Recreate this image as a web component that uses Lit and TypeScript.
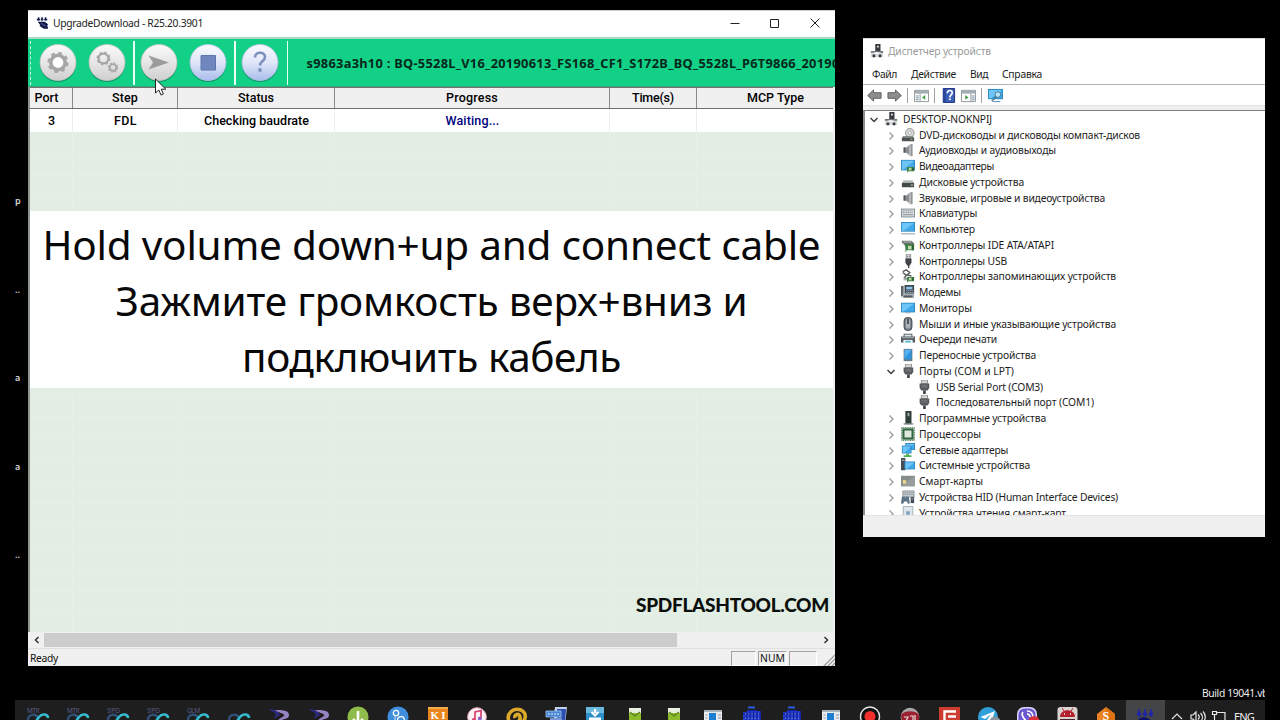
import { LitElement, html, svg, css, nothing } from "lit";
import { customElement, property } from "lit/decorators.js";

/** A line of text whose tracking is adjusted so that it spans `w` pixels. */
@customElement("fit-text")
class FitText extends LitElement {
  static styles = css`
    :host { display: inline-block; white-space: pre; }
  `;
  @property({ type: Number }) w = 0;
  @property() text = "";
  render() {
    return html`<span>${this.text}</span>`;
  }
  updated() {
    const s = this.renderRoot.querySelector("span") as HTMLElement;
    s.style.letterSpacing = "0px";
    const n = this.text.length;
    if (this.w && n) s.style.letterSpacing = (this.w - s.getBoundingClientRect().width) / n + "px";
  }
}

const fit = (text: string, w: number) => html`<fit-text .text=${text} .w=${w}></fit-text>`;

const board = svg`<path d="M7 9h8v5H8v1H7z" fill="#3f7f45"/><path d="M9 10h3v3H9z" fill="#bcd6a4"/><path d="M13 10h1v3h-1z" fill="#1d4a28"/>`;
const screen = (x: number, y: number, w: number, h: number) => svg`
  <rect x=${x} y=${y} width=${w} height=${h} fill="#2f7fb5"/>
  <rect x=${x + 0.8} y=${y + 0.8} width=${w - 1.6} height=${h - 1.6} fill="#3fa9ea"/>
  <path d=${`M${x + w - 1} ${y + 1}L${x + 3} ${y + h - 1}H${x + 1}V${y + 1}z`} fill="#6cc4f7"/>`;

const glyphs: Record<string, unknown> = {
  pc: svg`<path d="M6 0h6v9H6z" fill="#3a3d40"/><path d="M8 2h2v2H8z" fill="#e8e8e8"/><path d="M1 8h14v7H1z" fill="#d9dcde"/><path d="M1 8h14v2H1z" fill="#70757a"/><path d="M3 12h3v3H3zM10 12h3v3h-3z" fill="#33373a"/><path d="M4 10l4-1 4 1v1H4z" fill="#f6f6f6"/>`,
  dvd: svg`<circle cx="10" cy="5.500" r="5" fill="#d2d4d5" stroke="#8f9294"/><circle cx="10" cy="5.500" r="1.600" fill="#fff" stroke="#999" stroke-width=".7"/><path d="M3 9h10l2 2v4H1v-4z" fill="#4e5254"/><path d="M3 9h10l2 2H1z" fill="#8b8f91"/><path d="M11 12.500h2v1h-2z" fill="#9ee089"/>`,
  sound: svg`<path d="M3 5h3l5-4v14l-5-4H3z" fill="#8b8f92"/><path d="M3 5h2v6H3z" fill="#55595c"/><path d="M9 3l3-2v14l-3-2z" fill="#b5b8ba"/><path d="M12 1h1v14h-1z" fill="#4d5154"/>`,
  video: svg`${screen(0, 1, 16, 12)}${board}`,
  disk: svg`<path d="M3 6h10l2 3H1z" fill="#b9bcbd"/><path d="M1 9h14v5H1z" fill="#45494b"/><path d="M11 11h3v1h-3z" fill="#d9dcdc"/>`,
  keyboard: svg`<path d="M0 3h16v10H0z" fill="#7d858b"/><path d="M1 4h14v8H1z" fill="#dfe3e5"/><path d="M2 5.500h12M2 7.500h12" stroke="#757d82" stroke-dasharray="1.300 .7"/><path d="M2 10h12" stroke="#757d82"/>`,
  computer: svg`${screen(0, 0, 16, 11)}<path d="M0 13.500h16" stroke="#7d95a5"/>`,
  ide: svg`<path d="M1 3h11l3 3v2H3V6H1z" fill="#6d7673"/><path d="M3 4h9v1H3z" fill="#b9c6bd"/><path d="M4 7h11v7H6v2H5v-5z" fill="#3f7f45"/><path d="M8 9h4v4H8z" fill="#c4dcb2"/><path d="M13 8h1v6h-1z" fill="#1d4a28"/>`,
  usb: svg`<path d="M6 0h5v5H6z" fill="#d7d9da" stroke="#777" stroke-width=".8"/><path d="M5 5h7v5l-2 3H7l-2-3z" fill="#3f4345"/><path d="M8 12h1.500v4H8z" fill="#3f4345"/><path d="M7 2h1v1H7zM9 2h1v1H9z" fill="#555"/>`,
  storage: svg`<path d="M2 3l4-2 4 3-3 3 5 1M2 4l4 3-2 3 4 2" fill="none" stroke="#585d5a" stroke-width="1.700"/><path d="M3 10h4v3H3z" fill="#a5aba7"/>${board}`,
  modem: svg`<path d="M4 0h11v10H4z" fill="#3d4a56"/><path d="M6 2h7v3H6z" fill="#8fc5e8"/><path d="M6 6.500h8M6 8.500h8" stroke="#c7d1d8" stroke-dasharray="1.300 1"/><path d="M0 1h3v12H0z" fill="#5c666e"/><path d="M2 10h13v5H2z" fill="#a9b0b5"/><path d="M3 12h10v2H3z" fill="#4e565b"/>`,
  monitor: svg`${screen(0, 2, 16, 11)}<path d="M5 13.500h6" stroke="#8fa4b0"/>`,
  mouse: svg`<rect x="3.500" y=".5" width="9" height="15" rx="4" fill="#77818a" stroke="#363c40"/><rect x="5.500" y="2" width="5" height="11" rx="2.500" fill="#aab3ba"/><path d="M8 2v6" stroke="#2e3336" stroke-width="1.600"/>`,
  printer: svg`<path d="M3 2h10v4H3z" fill="#4c5459"/><path d="M4 3h8v3H4z" fill="#dfe4e6"/><path d="M0 5h16v7h-3V9H3v3H0z" fill="#545b60"/><path d="M1 6.500h14" stroke="#b7bec2"/><path d="M3 9h10v4H3z" fill="#e9f3f5"/><path d="M5 10h6v2H5z" fill="#57b9d0"/>`,
  portable: svg`<path d="M3 1h10v14H3z" fill="#6b7880"/><path d="M4 2h8v11H4z" fill="#2b93e0"/><path d="M4 2h8L4 12z" fill="#55b0f0"/>`,
  port: svg`<path d="M5 0h7v4H5z" fill="#d4d4d4" stroke="#777" stroke-width=".8"/><path d="M3 4h11v5l-2 3H5L3 9z" fill="#56595b"/><path d="M5 6h7M5 8h7" stroke="#8a8d8f" stroke-width=".8"/><path d="M7 12h3v4H7z" fill="#3c3f41"/>`,
  software: svg`<path d="M5 0h7v15H5z" fill="#2f3f38"/><path d="M7.500 2h2v4h-2z" fill="#a8b9b0"/><path d="M3 14h11v1.500H3z" fill="#7f8783"/>`,
  cpu: svg`<path d="M.5.5h15v15H.5z" fill="none" stroke="#3c6b47" stroke-dasharray="1.200 .8"/><path d="M1.500 1.500h13v13h-13z" fill="#2f6540"/><path d="M4 4h8v8H4z" fill="#dfe9de"/>`,
  network: svg`${screen(5, 0, 11, 8)}${screen(1, 3, 11, 9)}<path d="M6 12h3v2h3v2H3v-2h3z" fill="#4caf59"/>`,
  system: svg`<path d="M0 0h5v14H0z" fill="#444e56"/><path d="M1 2h3v1H1z" fill="#bdc6cc"/>${screen(4, 4, 12, 9)}`,
  card: svg`<path d="M0 2h16v12H0z" fill="#868d8d"/><path d="M0 14L16 2v12z" fill="#979d9c"/><path d="M2 7h4v4H2z" fill="#ead68b"/>`,
  hid: svg`<path d="M2 1h13v7H2z" fill="#c5cbcf" stroke="#7d868c" stroke-width=".8"/><path d="M3 3h11M3 5h11" stroke="#7d868c" stroke-dasharray="1.200 .8"/><path d="M1 8l3-1 1 2 1-2 3 1 1 7-2 1-1-3H4l-2 3-2-1z" fill="#5b7384"/><path d="M11 8h4v7h-4z" fill="#444f57"/><path d="M12 10h2" stroke="#bcd"/>`,
  reader: svg`<path d="M2.500.5h11v15h-11z" fill="#dfe7ec" stroke="#9aa8b1"/><path d="M6 6h4v4H6z" fill="#7ca3bd"/>`,
};

type Row = { icon: string; text: string; w: number; depth: number; open?: boolean; leaf?: boolean };
const r = (icon: string, text: string, w: number): Row => ({ icon, text, w, depth: 1 });
const ROWS: Row[] = [
  { icon: "pc", text: "DESKTOP-NOKNPIJ", w: 89, depth: 0, open: true },
  r("dvd", "DVD-дисководы и дисководы компакт-дисков", 221),
  r("sound", "Аудиовходы и аудиовыходы", 137),
  r("video", "Видеоадаптеры", 75),
  r("disk", "Дисковые устройства", 105),
  r("sound", "Звуковые, игровые и видеоустройства", 186),
  r("keyboard", "Клавиатуры", 58),
  r("computer", "Компьютер", 56),
  r("ide", "Контроллеры IDE ATA/ATAPI", 135),
  r("usb", "Контроллеры USB", 88),
  r("storage", "Контроллеры запоминающих устройств", 197),
  r("modem", "Модемы", 42),
  r("monitor", "Мониторы", 53),
  r("mouse", "Мыши и иные указывающие устройства", 197),
  r("printer", "Очереди печати", 78),
  r("portable", "Переносные устройства", 117),
  { icon: "port", text: "Порты (COM и LPT)", w: 95, depth: 1, open: true },
  { icon: "port", text: "USB Serial Port (COM3)", w: 107, depth: 2, leaf: true },
  { icon: "port", text: "Последовательный порт (COM1)", w: 158, depth: 2, leaf: true },
  r("software", "Программные устройства", 127),
  r("cpu", "Процессоры", 62),
  r("network", "Сетевые адаптеры", 89),
  r("system", "Системные устройства", 111),
  r("card", "Смарт-карты", 64),
  r("hid", "Устройства HID (Human Interface Devices)", 199),
  r("reader", "Устройства чтения смарт-карт", 147),
];

@customElement("device-manager")
class DeviceManager extends LitElement {
  static styles = css`
    :host { display: flex; flex-direction: column; background: #fff; overflow: hidden; color: #1c1c1c; font: 10.3px/16px "Noto Sans", "Open Sans", sans-serif; }
    .title { height: 28px; display: flex; align-items: center; gap: 4px; padding: 0 0 3px 7px; color: #999; border-top: 1px solid #ddd; box-sizing: border-box; }
    .title svg { width: 14px; height: 14px; }
    .menu { height: 18px; display: flex; align-items: center; gap: 14px; padding: 0 0 2px 9px; border-bottom: 1px solid #b4b4b4; box-sizing: border-box; height: 19px; }
    .tools { height: 20px; display: flex; align-items: center; padding: 0 0 0 4px; }
    .tools svg { width: 15px; height: 15px; }
    .tools .arrow { margin-right: 5px; }
    .sep { width: 1px; height: 15px; background: #a0a0a0; margin-right: 6px; }
    .gap { width: 5px; }
    .band { height: 5px; background: #f0f0f0; border-top: 1px solid #e2e2e2; box-sizing: border-box; }
    .tree { flex: 1; min-height: 0; overflow: hidden; border-top: 1.500px solid #7c7c7c; border-left: 2px solid #8a8a8a; }
    .row { height: 15.750px; display: flex; align-items: center; white-space: nowrap; }
    .d0 { padding-left: 2px; }
    .d1 { padding-left: 19px; }
    .d2 { padding-left: 52px; }
    .chev { width: 14px; height: 12px; fill: none; stroke: #9a9a9a; stroke-width: 1.300; margin-right: 3px; }
    .chev.open { stroke: #404040; stroke-width: 1.500; }
    .ico { width: 14px; height: 14px; margin-right: 4px; }
    .d0 .ico { margin-right: 5px; }
    .d2 .ico { margin-right: 5px; }
    .foot { height: 22px; background: #f0f0f0; border-top: 1px solid #e4e4e4; box-sizing: border-box; }
  `;
  render() {
    return html`
      <div class="title"><svg viewBox="0 0 16 16">${glyphs.pc}</svg>${fit("Диспетчер устройств", 103)}</div>
      <div class="menu">${fit("Файл", 25)}${fit("Действие", 45)}${fit("Вид", 18)}${fit("Справка", 40)}</div>
      <div class="tools">
        <svg class="arrow" viewBox="0 0 16 16"><path d="M.7 8L7 2v3h8v6H7v3z" fill="#8d8d8d" stroke="#5e5e5e" /></svg>
        <svg class="arrow" viewBox="0 0 16 16"><path d="M15.300 8L9 2v3H1v6h8v3z" fill="#8d8d8d" stroke="#5e5e5e" /></svg>
        <div class="sep"></div>
        <svg viewBox="0 0 16 16"><path d="M.5 2.500h15v12H.5z" fill="#fff" stroke="#8c959b" /><path d="M1 3h14v3H1z" fill="#a4adb3" /><path d="M2 8.500h3M2 10.500h3M2 12.500h3" stroke="#6d8294" /><path d="M6.500 6v8" stroke="#8c959b" /><path d="M12 7.500v5L8.500 10z" fill="#43a047" /></svg>
        <div class="gap"></div><div class="sep"></div>
        <svg viewBox="0 0 16 16"><path d="M2.500.5h12v15h-12z" fill="#3c5fb8" stroke="#1d2f73" /><path d="M2 .5h3v15H2z" fill="#2a4497" /><path d="M6.800 5.500c0-4 5.600-3.500 5.200-.2-.2 2-2.600 2-2.600 4.700M8.500 12h2" fill="none" stroke="#fff" stroke-width="1.800" /></svg>
        <div class="gap"></div>
        <svg viewBox="0 0 16 16"><path d="M.5 2.500h15v12H.5z" fill="#fff" stroke="#8c959b" /><path d="M1 3h14v3H1z" fill="#a4adb3" /><path d="M11.500 8.500h3M11.500 10.500h3M11.500 12.500h3" stroke="#6d8294" /><path d="M10.500 6v8" stroke="#8c959b" /><path d="M4.500 7.500v5L8 10z" fill="#43a047" /></svg>
        <div class="gap"></div><div class="sep"></div>
        <svg viewBox="0 0 16 16">${screen(0, 1, 16, 11)}<path d="M5 14.500h8" stroke="#4a87a8" /><circle cx="10.500" cy="7" r="3" fill="#b9e3f8" stroke="#47748c" /><path d="M8.500 9.500L4 14" stroke="#47748c" stroke-width="1.500" /></svg>
      </div>
      <div class="band"></div>
      <div class="tree">
        ${ROWS.map(
          (x) => html`<div class="row d${x.depth}">
            ${x.leaf
              ? nothing
              : x.open
                ? html`<svg class="chev open" viewBox="0 0 14 12"><path d="M3.500 5L7 8.500 10.500 5" /></svg>`
                : html`<svg class="chev" viewBox="0 0 14 12"><path d="M5.500 3.500L9 7l-3.500 3.500" /></svg>`}
            <svg class="ico" viewBox="0 0 16 16">${glyphs[x.icon]}</svg>${fit(x.text, x.w)}
          </div>`,
        )}
      </div>
      <div class="foot"></div>
    `;
  }
}

const chip = svg`<path d="M3 1v4M7 1v4M11 1v4M1 3.500h3.500M5.500 3.500h3M9.500 3.500h3.500" stroke="#111a4d" stroke-width="1.700"/><path d="M2 6h8l4 3-1 1 1 4h-5L4 11l1-1z" fill="#111a4d"/><path d="M6 8l5 3" stroke="#7d86b5" stroke-width=".8"/>`;
const gear = (cx: number, cy: number, rr: number, t: number) => svg`
  <circle cx=${cx} cy=${cy} r=${rr} fill="none" stroke="#a6a6a6" stroke-width=${t}/>
  <circle cx=${cx} cy=${cy} r=${rr + t * 0.65} fill="none" stroke="#a6a6a6" stroke-width=${t * 0.6} stroke-dasharray=${`${(rr + t * 0.65) * 0.3927} ${(rr + t * 0.65) * 0.3927}`}/>`;
const orb = (kind: "grey" | "blue", inner: unknown) => html`<svg class="orb" viewBox="0 0 38 40">
  <defs>
    <linearGradient id="g-${kind}" x1="0" y1="0" x2="0" y2="1">
      ${kind === "grey"
        ? svg`<stop offset="0" stop-color="#fafafa"/><stop offset=".5" stop-color="#e6e6e6"/><stop offset="1" stop-color="#cfcfcf"/>`
        : svg`<stop offset="0" stop-color="#fbfcff"/><stop offset=".5" stop-color="#dfe6f8"/><stop offset="1" stop-color="#a9bdec"/>`}
    </linearGradient>
  </defs>
  <circle cx="19" cy="20.800" r="18.300" fill="#0b6b4a" opacity=".55" />
  <circle cx="19" cy="19.500" r="18" fill="url(#g-${kind})" stroke=${kind === "grey" ? "#c4c4c4" : "#b4c3e6"} stroke-width=".8" />
  ${inner}
</svg>`;

const COLS = ["Port", "Step", "Status", "Progress", "Time(s)", "MCP Type"];
const HEAD_W = [24, 26, 36, 52, 42, 57];

@customElement("upgrade-window")
class UpgradeWindow extends LitElement {
  static styles = css`
    :host { display: flex; flex-direction: column; background: #f0f0f0; overflow: hidden; color: #111; font: 10.300px/14px "Noto Sans", "Open Sans", sans-serif; }
    .title { height: 27px; flex: none; background: #fff; display: flex; align-items: center; padding: 0 14px 2px 8px; box-sizing: border-box; border-top: 1px solid #cfcfcf; color: #222; }
    .title .app { width: 13px; height: 14px; margin-right: 4px; }
    .title .fill { flex: 1; }
    .ctl { width: 12px; height: 12px; margin-left: 28px; fill: none; stroke: #222; }
    .bar { height: 50px; flex: none; box-sizing: border-box; border-top: 2px solid #a3dcc3; background: #12d086; display: flex; align-items: center; border-bottom: 1px solid #3aa67c; }
    .grip { width: 0; height: 44px; border-left: 1px dashed #c8f5e2; margin-left: 2px; margin-right: 8px; }
    .orb { width: 38px; height: 40px; flex: none; }
    .o2 { margin-left: 10.500px; display: flex; }
    .sep { width: 1.500px; height: 44px; background: #eafff6; flex: none; margin: 0 5.500px 0 7.500px; }
    .file { font-weight: 700; font-size: 12.800px; margin-left: 13px; color: #06281b; white-space: nowrap; }
    .table { flex: 1; min-height: 0; display: flex; flex-direction: column; overflow: hidden; margin: 0 2px 0 0; border-left: 2px solid #8d9490; }
    .cols { display: grid; grid-template-columns: 43px 105px 157px 275px 87px 158px; font: 500 12.500px/14px Roboto, sans-serif; flex: none; }
    .cols > div { display: flex; justify-content: center; align-items: center; box-sizing: border-box; border-right: 1px solid #8b8b8b; }
    .head { height: 22px; background: #f0f0f0; border-top: 1px solid #6d7471; border-bottom: 1px solid #6f6f6f; box-sizing: border-box; color: #000; }
    .head .c0 { padding-right: 9px; }
    .cells { height: 23px; background: #fff; color: #000; }
    .cells > div { padding: 1px 0 0 1px; }
    .cells > div, .body > div { border-right-color: #e6efe8; }
    .wait { color: #00007e; }
    .body { flex: 1; background: repeating-linear-gradient(#e2ede4 0 20.900px, #e6f0e8 20.900px 21.900px); }
    .scroll { height: 16px; flex: none; display: flex; align-items: center; background: #f0f0f0; }
    .scroll svg { width: 16px; height: 14px; fill: none; stroke: #333; stroke-width: 1.500; flex: none; }
    .thumb { width: 633px; height: 14px; background: #cdcdcd; }
    .track { flex: 1; }
    .status { height: 18px; flex: none; display: flex; align-items: flex-end; background: #f0f0f0; border-top: 1px solid #e0e0e0; box-sizing: border-box; padding-left: 2px; }
    .status .fill { flex: 1; line-height: 18px; height: 17px; }
    .pane { width: 25px; height: 15px; border: 1px solid #a0a0a0; border-right-color: #fff; border-bottom-color: #fff; box-sizing: border-box; margin-right: 2px; line-height: 13px; padding-left: 1px; }
    .num { width: 29px; }
    .wide { width: 28px; margin-right: 6px; }
    .resize { width: 12px; height: 12px; stroke: #999; stroke-width: 1.200; }
  `;
  render() {
    return html`
      <div class="title">
        <svg class="app" viewBox="0 0 15 15">${chip}</svg>${fit("UpgradeDownload - R25.20.3901", 150)}
        <div class="fill"></div>
        <svg class="ctl" viewBox="0 0 12 12"><path d="M1.500 6.500h9" /></svg>
        <svg class="ctl" viewBox="0 0 12 12"><path d="M1.500 2.500h8v8h-8z" /></svg>
        <svg class="ctl" viewBox="0 0 12 12"><path d="M1.500 1.500l9 9M10.500 1.500l-9 9" /></svg>
      </div>
      <div class="bar">
        <div class="grip"></div>
        ${orb("grey", svg`<circle cx="19" cy="19.500" r="6" fill="#fff"/>${gear(19, 19.5, 7.2, 3.6)}`)}
        <div class="o2">${orb("grey", svg`${gear(15.5, 15.5, 4.9, 2.2)}${gear(25, 24.5, 3.4, 1.9)}`)}</div>
        <div class="sep"></div>
        ${orb("grey", svg`<path d="M8.500 12.500l20.500 7-20.500 7 4.500-7z" fill="#9c9c9c"/>`)}
        <div class="o2">${orb("blue", svg`<path d="M12 12.500h14.500v14.500H12z" fill="#6f87bd" stroke="#5e76ad"/>`)}</div>
        <div class="sep"></div>
        ${orb("blue", svg`<path d="M14 14.500c0-6.500 10-6 10-.5 0 4-5 4-5 8.500" fill="none" stroke="#7d8fbd" stroke-width="2.600"/><circle cx="19" cy="27" r="1.900" fill="#7d8fbd"/>`)}
        <div class="sep"></div>
        <div class="file">${fit("s9863a3h10 : BQ-5528L_V16_20190613_FS168_CF1_S172B_BQ_5528L_P6T9866_20190", 533)}</div>
      </div>
      <div class="table">
        <div class="cols head">${COLS.map((c, i) => html`<div class="c${i}">${fit(c, HEAD_W[i])}</div>`)}</div>
        <div class="cols cells">
          <div>3</div>
          <div>${fit("FDL", 23)}</div>
          <div>${fit("Checking baudrate", 105)}</div>
          <div class="wait">${fit("Waiting...", 54)}</div>
          <div></div>
          <div></div>
        </div>
        <div class="cols body">${COLS.map(() => html`<div></div>`)}</div>
      </div>
      <div class="scroll">
        <svg viewBox="0 0 16 14"><path d="M10.500 4L7.500 7l3 3" /></svg>
        <div class="thumb"></div>
        <div class="track"></div>
        <svg viewBox="0 0 16 14"><path d="M5.500 4l3 3-3 3" /></svg>
      </div>
      <div class="status">
        <div class="fill">${fit("Ready", 28)}</div>
        <div class="pane"></div>
        <div class="pane num">${fit("NUM", 25)}</div>
        <div class="pane wide"></div>
        <svg class="resize" viewBox="0 0 12 12"><path d="M1 12L12 1M5 12l7-7M9 12l3-3" /></svg>
      </div>
    `;
  }
}

const loop = (label: string) => svg`
  ${label ? svg`<text x="6" y="7" font-size="6.500" fill="#555b86" font-family="Inter" textLength="13">${label}</text>` : nothing}
  <path d="M17 12c-2-5-10-4-10 2s8 6 10 1" fill="none" stroke="#315078" stroke-width="2.400"/>
  <path d="M13 18l5-7c3-4 9-3 9 1" fill="none" stroke="#35bbd0" stroke-width="2.600"/>`;
const swoosh = svg`<path d="M6 3c6 0 11 2 12 6l-6 4 2-5c-2-2-4-3-8-5z" fill="#2e2a80"/><path d="M13 4c7 0 14 0 14 5s-7 3-13 8c3-6 9-6 8-8s-5-2-9-5z" fill="#9684c2"/>`;
const robot = svg`<path d="M10 2h12v18H10z" fill="#e8eee0"/><path d="M10 7h12v10H10z" fill="#8dbb2e"/><path d="M11 6l5 4 5-4" fill="none" stroke="#557f1c" stroke-width="1.200"/>`;
const panel = svg`<path d="M7 4h18v14H7z" fill="#e9ecef"/><path d="M7 4h18v2H7z" fill="#a9b3bb"/><path d="M12 7h7v12h-7z" fill="#1e7ed2"/><path d="M21 9h3M21 12h3M8.500 9h2M8.500 12h2" stroke="#89939b"/>`;
const digital = svg`<path d="M7 4h18v10H7z" fill="#131f9c"/><path d="M12 1.500h7" stroke="#2c58e8" stroke-width="2"/><path d="M7 6h18M7 10h18M7 13h18" stroke="#2b49f0" stroke-width="1.600" stroke-dasharray="2.500 1.200"/><path d="M9 8h14M9 12h14" stroke="#9cc3ff" stroke-width="1" stroke-dasharray="1.200 2"/><path d="M7 3h4v3H7zM21 3h4v2h-4z" fill="#1e1e1e"/>`;

const TASKS: unknown[] = [
  loop("MTK"), loop("MTK"), loop("SPD"), loop("SPD"), loop("QLM"), loop(""), swoosh, swoosh,
  svg`<circle cx="16" cy="11" r="10.500" fill="#8fbc4b"/><path d="M16 5v10M11 13l5 5 5-5" fill="none" stroke="#fff" stroke-width="2.600"/>`,
  svg`<circle cx="16" cy="11" r="10.500" fill="#3f8fdc"/><circle cx="14" cy="7" r="2.700" fill="none" stroke="#fff" stroke-width="1.300"/><circle cx="19" cy="14" r="3.400" fill="none" stroke="#fff" stroke-width="1.300"/><path d="M13 10v6h4" fill="none" stroke="#cfe5fb"/>`,
  svg`<path d="M6 1h20v19H6z" fill="#e8861b"/><path d="M6 1h20v2H6z" fill="#f5ab4c"/><text x="8.500" y="13" font-size="11" font-weight="700" fill="#fff" font-family="Liberation Serif" textLength="15">KI</text>`,
  svg`<circle cx="16" cy="11" r="9.300" fill="#fbf3f6" stroke="#ecaebd"/><path d="M14 14V6l6-1.500v8" fill="none" stroke="#d6426c" stroke-width="1.700"/><circle cx="12.800" cy="14" r="2" fill="#d6426c"/><circle cx="18.800" cy="12.600" r="2" fill="#8c62c9"/>`,
  svg`<path d="M14 12c-1-4 4-5 5-1s-4 7-8 6M8 15c-3-7 4-14 12-11 6 3 5 9 1 13" fill="none" stroke="#dca92b" stroke-width="3.600"/>`,
  svg`<path d="M15 1h12l-2 18H13z" fill="#c3cfe9"/><path d="M17 3h9l-1 14h-8z" fill="#2f4fb0"/><path d="M6 5h15v6H6z" fill="#4a86d4" stroke="#9cc6f4" stroke-width=".8"/><path d="M8 8h11" stroke="#d8ecff" stroke-dasharray="2 1"/><path d="M10 12h12v4H10z" fill="#7895d6"/>`,
  svg`<path d="M7 1h18v18H7z" fill="#2d8fc7"/><path d="M7 1h18v6H7z" fill="#69b9df"/><path d="M16 3v4M12.500 6l3.500 3.500L19.500 6" fill="none" stroke="#fff" stroke-width="2.200"/><path d="M10 11.500h12V14H10z" fill="#fff"/>`,
  robot, robot, panel, digital, digital, panel,
  svg`<circle cx="16" cy="10.500" r="9.500" fill="#111" stroke="#e8e8e8" stroke-width="1.400"/><circle cx="16" cy="10.500" r="5.500" fill="#f2302e"/>`,
  svg`<circle cx="16" cy="11" r="9.300" fill="#a8a8a8"/><path d="M7 9c3-5 15-5 18 0v8H8z" fill="#9d2130"/><path d="M10 11h4l-2 4M16 10h3v4M21 9v6" fill="none" stroke="#e6dede" stroke-width="1.200"/>`,
  svg`<path d="M6 1h21v19H6z" fill="#ce3c30"/><path d="M23 5.500H11.500V20M15 10.500h8" fill="none" stroke="#fff" stroke-width="2.400"/>`,
  svg`<circle cx="16" cy="11" r="10" fill="#2e9fd8"/><path d="M8.500 11L23 5l-4 12-4-3 4-6-6 5z" fill="#fff"/><circle cx="23" cy="16" r="5.500" fill="#89949b"/>`,
  svg`<rect x="6" y="1" width="20" height="22" rx="7" fill="#d9d3f5"/><rect x="7.500" y="2.500" width="17" height="20" rx="6" fill="#6d57cf"/><path d="M12 6c-2 2 0 7 5 10M16 5c4 0 6 3 6 6M16 8c2 0 3 1 3 3" fill="none" stroke="#fff" stroke-width="1.700"/><circle cx="23" cy="15.500" r="5.500" fill="#dc3338"/>`,
  svg`<rect x="6.500" y="1" width="20" height="22" rx="3" fill="#d8d2d1"/><path d="M9 11c0-9 15-9 15 0z" fill="#b5202b"/><path d="M9 13h15v6H9z" fill="#4a2528"/><path d="M11 2l2 3M22 2l-2 3" stroke="#b5202b"/><path d="M13 8h1M19 8h1" stroke="#fff" stroke-width="1.500"/>`,
  svg`<path d="M16 1l9 7v12H7V8z" fill="#ea8420"/><path d="M16 1l9 7v12h-9z" fill="#dd7315"/><text x="12.500" y="14" font-size="12" font-weight="700" fill="#fff" font-family="Liberation Serif">S</text>`,
  svg`<path d="M10 3v7M16 3v7M22 3v7M8 7l2 3 2-3M14 7l2 3 2-3M20 7l2 3 2-3" fill="none" stroke="#1b22b5" stroke-width="1.500"/><path d="M9 14c3-4 9-4 15 2v4H11z" fill="#0d1270"/>`,
];

@customElement("app-root")
class AppRoot extends LitElement {
  static styles = css`
    :host { display: block; position: relative; width: 1280px; height: 720px; background: #000; overflow: hidden; font-family: "Noto Sans", "Open Sans", sans-serif; }
    .upgrade { position: absolute; left: 28px; top: 10px; width: 807px; height: 656px; }
    .devices { position: absolute; left: 863px; top: 38px; width: 402px; height: 499px; }
    .caption { position: absolute; left: 30px; top: 211px; width: 803px; height: 177px; background: #fff; display: flex; flex-direction: column; align-items: center; padding-top: 6px; box-sizing: border-box; font-size: 40.500px; line-height: 56px; color: #080808; }
    .brand { position: absolute; left: 636px; top: 593px; font: 900 19px/24px Lato, sans-serif; color: #0a0f0b; }
    .cursor { position: absolute; left: 154px; top: 78px; width: 13px; height: 19px; }
    .labels { position: absolute; left: 15px; top: 157px; width: 10px; display: flex; flex-direction: column; font-size: 9px; font-weight: 600; color: #d8d8d8; }
    .labels span { height: 88.500px; line-height: 88px; }
    .build { position: absolute; left: 1202px; top: 686px; width: 63px; height: 14px; overflow: hidden; font-size: 10.300px; line-height: 14px; color: #eee; white-space: nowrap; }
    .task { position: absolute; left: 15px; top: 700px; width: 1250px; height: 20px; background: #1e1e1e; display: flex; overflow: hidden; padding-left: 1.500px; box-sizing: border-box; }
    .cell { width: 39.300px; height: 20px; flex: none; display: flex; justify-content: center; }
    .first { width: 40.200px; }
    .active { background: #444547; }
    .cell svg { width: 32px; height: 24px; flex: none; margin-top: 6px; }
    .tray { display: flex; gap: 5px; padding-left: 4px; color: #f0f0f0; font-size: 11px; line-height: 14px; }
    .tray svg { width: 16px; height: 16px; margin-top: 9px; fill: none; stroke: #e8e8e8; stroke-width: 1.200; flex: none; }
    .lang { padding-top: 10px; margin-left: 2px; }
  `;
  render() {
    return html`
      <div class="labels"><span>р</span><span>..</span><span>а</span><span>а</span><span>..</span></div>
      <upgrade-window class="upgrade"></upgrade-window>
      <device-manager class="devices"></device-manager>
      <div class="caption">
        ${fit("Hold volume down+up and connect cable", 778)}${fit("Зажмите громкость верх+вниз и", 632)}${fit("подключить кабель", 379)}
      </div>
      <div class="brand">${fit("SPDFLASHTOOL.COM", 193)}</div>
      <svg class="cursor" viewBox="0 0 13 19"><path d="M1.500 1v14l3.300-3 2.200 5 2.400-1-2.200-4.800h4.600z" fill="#fff" stroke="#222" /></svg>
      <div class="build">${fit("Build 19041.vb", 66)}</div>
      <div class="task">
        ${TASKS.map((t, i) => html`<div class="cell ${i < 10 ? "first" : i === TASKS.length - 1 ? "active" : ""}"><svg viewBox="0 0 32 24">${t}</svg></div>`)}
        <div class="tray">
          <svg viewBox="0 0 16 16"><path d="M3 10l5-5 5 5" /></svg>
          <svg viewBox="0 0 16 16"><path d="M1 6h2l3-3v10l-3-3H1zM8 5.500c1.500 1.500 1.500 3.500 0 5M10.500 4c2.500 2.500 2.500 6 0 8.500M13 2.500c3 3 3 8 0 11" /></svg>
          <svg viewBox="0 0 16 16"><path d="M5 3.500h9v8H5M1.500 2.500h4v3h-4zM3.500 5.500V14" /></svg>
          <div class="lang">${fit("ENG", 20)}</div>
        </div>
      </div>
    `;
  }
}
